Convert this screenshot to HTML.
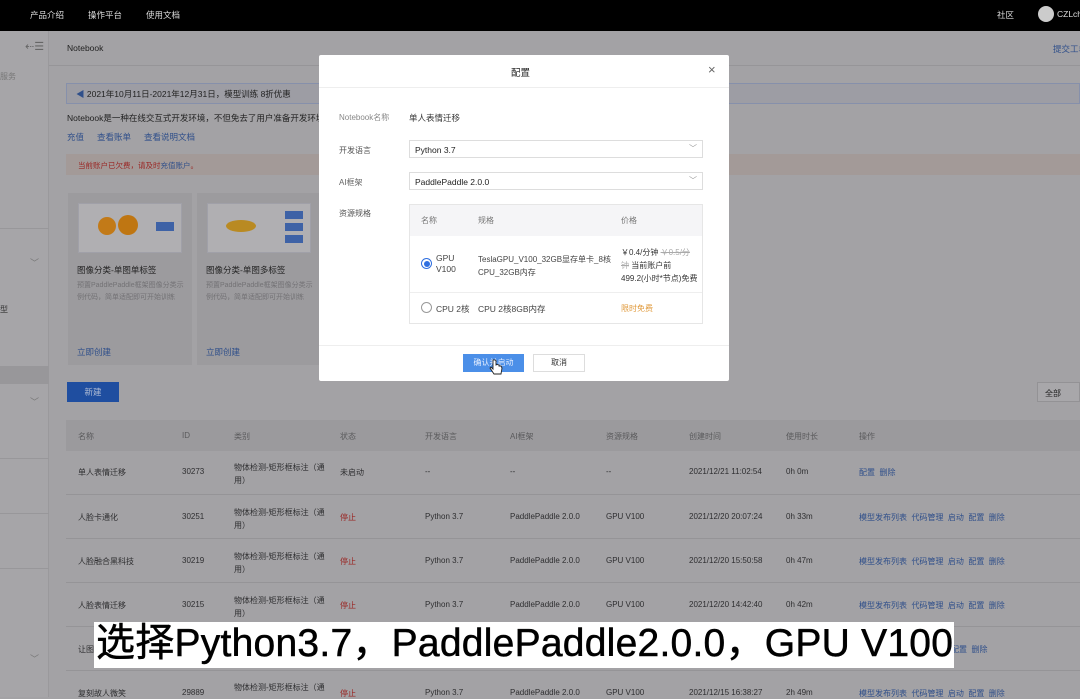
<!DOCTYPE html>
<html style="background:#a3a2a5"><head><meta charset="utf-8"><style>
*{margin:0;padding:0;box-sizing:border-box}
html,body{background:#a3a2a5}
body{width:1080px;height:697px;overflow:hidden;font-family:"Liberation Sans","Noto Sans CJK SC",sans-serif;font-size:8px;color:#2e2e30;position:relative}
.a{position:absolute;white-space:nowrap}
.blue{color:#2f4f8a}
.red{color:#9a2624}
.gr{color:#5a5a5c}
</style></head><body>
<div class="a" style="left:0;top:0;width:1080px;height:697px;background:#a3a2a5"></div>
<div class="a" style="left:0;top:0;width:1080px;height:31px;background:#000"></div>
<div class="a" style="left:30px;top:9px;color:#ddd;font-size:8.5px">产品介绍</div>
<div class="a" style="left:88px;top:9px;color:#ddd;font-size:8.5px">操作平台</div>
<div class="a" style="left:146px;top:9px;color:#ddd;font-size:8.5px">使用文档</div>
<div class="a" style="left:997px;top:9px;color:#ddd;font-size:8.5px">社区</div>
<div class="a" style="left:1038px;top:6px;width:16px;height:16px;border-radius:50%;background:#ccc"></div>
<div class="a" style="left:1057px;top:9px;color:#ddd;font-size:8.5px">CZLch</div>
<div class="a" style="left:0;top:31px;width:49px;height:666px;background:#a6a5a8;border-right:1px solid #9a999c"></div>
<div class="a" style="left:25px;top:40px;color:#666;font-size:11px">⇠☰</div>
<div class="a" style="left:0;top:71px;color:#777;font-size:8px">服务</div>
<div class="a" style="left:0;top:228px;width:49px;height:1px;background:#98979a"></div>
<div class="a" style="left:30px;top:256px;color:#777;font-size:9px">﹀</div>
<div class="a" style="left:0;top:304px;color:#333;font-size:8px">型</div>
<div class="a" style="left:0;top:366px;width:49px;height:18px;background:#98979a"></div>
<div class="a" style="left:30px;top:395px;color:#777;font-size:9px">﹀</div>
<div class="a" style="left:0;top:458px;width:49px;height:1px;background:#98979a"></div>
<div class="a" style="left:0;top:513px;width:49px;height:1px;background:#98979a"></div>
<div class="a" style="left:0;top:568px;width:49px;height:1px;background:#98979a"></div>
<div class="a" style="left:30px;top:652px;color:#777;font-size:9px">﹀</div>
<div class="a" style="left:67px;top:43px;font-size:8.5px;color:#222">Notebook</div>
<div class="a" style="left:1053px;top:43px;font-size:8.5px"><span class="blue">提交工单</span></div>
<div class="a" style="left:49px;top:65px;width:1031px;height:1px;background:#969598"></div>
<div class="a" style="left:66px;top:83px;width:1014px;height:21px;border:1px solid #8690ab;background:#9d9da4"></div>
<div class="a" style="left:76px;top:88px;font-size:8.5px;color:#222"><span class="blue">◀︎</span> 2021年10月11日-2021年12月31日，模型训练 8折优惠</div>
<div class="a" style="left:67px;top:112px;font-size:8.5px;color:#222">Notebook是一种在线交互式开发环境，不但免去了用户准备开发环境的</div>
<div class="a" style="left:67px;top:131px;font-size:8.5px"><span class="blue">充值</span><span class="blue" style="margin-left:13px">查看账单</span><span class="blue" style="margin-left:13px">查看说明文档</span></div>
<div class="a" style="left:66px;top:154px;width:1014px;height:21px;background:#a39a98"></div>
<div class="a red" style="left:78px;top:160px;font-size:7.5px">当前账户已欠费，请及时<span class="blue">充值账户</span>。</div>
<div class="a" style="left:68px;top:193px;width:124px;height:172px;background:#9c9b9e"></div>
<div class="a" style="left:197px;top:193px;width:124px;height:172px;background:#9c9b9e"></div>
<div class="a" style="left:78px;top:203px;width:104px;height:50px;background:#b0afb2;border:1px solid #a0a0a8"></div>
<div class="a" style="left:98px;top:217px;width:18px;height:18px;border-radius:50%;background:#c27a18"></div>
<div class="a" style="left:118px;top:215px;width:20px;height:20px;border-radius:50%;background:#bf7612"></div>
<div class="a" style="left:156px;top:222px;width:18px;height:9px;background:#3e62a6"></div>
<div class="a" style="left:207px;top:203px;width:104px;height:50px;background:#b0afb2;border:1px solid #a0a0a8"></div>
<div class="a" style="left:226px;top:220px;width:30px;height:12px;border-radius:50%;background:#b98a22"></div>
<div class="a" style="left:285px;top:211px;width:18px;height:8px;background:#3e62a6"></div>
<div class="a" style="left:285px;top:223px;width:18px;height:8px;background:#3e62a6"></div>
<div class="a" style="left:285px;top:235px;width:18px;height:8px;background:#3e62a6"></div>
<div class="a" style="left:77px;top:264px;font-size:8.5px;color:#222">图像分类-单图单标签</div>
<div class="a" style="left:206px;top:264px;font-size:8.5px;color:#222">图像分类-单图多标签</div>
<div class="a" style="left:77px;top:280px;font-size:7px;line-height:12px;color:#737275">预置PaddlePaddle框架图像分类示<br>例代码，简单适配即可开始训练</div>
<div class="a" style="left:206px;top:280px;font-size:7px;line-height:12px;color:#737275">预置PaddlePaddle框架图像分类示<br>例代码，简单适配即可开始训练</div>
<div class="a blue" style="left:77px;top:346px;font-size:8.5px">立即创建</div>
<div class="a blue" style="left:206px;top:346px;font-size:8.5px">立即创建</div>
<div class="a" style="left:67px;top:382px;width:52px;height:20px;background:#1f4ea0;color:#b0bcd4;font-size:8.5px;text-align:center;line-height:20px">新建</div>
<div class="a" style="left:1037px;top:382px;width:43px;height:20px;border:1px solid #939295;background:#a8a7aa;font-size:8px;padding:5px 7px;color:#222">全部</div>
<div class="a" style="left:66px;top:420px;width:1014px;height:31px;background:#9b9a9d"></div>
<div class="a gr" style="left:0;top:431px;width:1080px;height:10px;font-size:8px">
<span class="a" style="left:78px">名称</span><span class="a" style="left:182px">ID</span><span class="a" style="left:234px">类别</span><span class="a" style="left:340px">状态</span><span class="a" style="left:425px">开发语言</span><span class="a" style="left:510px">AI框架</span><span class="a" style="left:606px">资源规格</span><span class="a" style="left:689px">创建时间</span><span class="a" style="left:786px">使用时长</span><span class="a" style="left:859px">操作</span></div>
<div class="a" style="left:66px;top:494px;width:1014px;height:1px;background:#959497"></div>
<div class="a" style="left:66px;top:538px;width:1014px;height:1px;background:#959497"></div>
<div class="a" style="left:66px;top:582px;width:1014px;height:1px;background:#959497"></div>
<div class="a" style="left:66px;top:626px;width:1014px;height:1px;background:#959497"></div>
<div class="a" style="left:66px;top:670px;width:1014px;height:1px;background:#959497"></div>
<div class="a" style="left:0;top:467px;width:1080px;font-size:8px">
<span class="a" style="left:78px">单人表情迁移</span><span class="a" style="left:182px">30273</span><span class="a" style="left:234px;top:-6px;line-height:13px">物体检测-矩形框标注（通<br>用）</span><span class="a" style="left:340px">未启动</span><span class="a" style="left:425px">--</span><span class="a" style="left:510px">--</span><span class="a" style="left:606px">--</span><span class="a" style="left:689px">2021/12/21 11:02:54</span><span class="a" style="left:786px">0h 0m</span><span class="a blue" style="left:859px">配置&nbsp;&nbsp;删除</span></div>
<div class="a" style="left:0;top:512px;width:1080px;font-size:8px">
<span class="a" style="left:78px">人脸卡通化</span><span class="a" style="left:182px">30251</span><span class="a" style="left:234px;top:-6px;line-height:13px">物体检测-矩形框标注（通<br>用）</span><span class="a red" style="left:340px">停止</span><span class="a" style="left:425px">Python 3.7</span><span class="a" style="left:510px">PaddlePaddle 2.0.0</span><span class="a" style="left:606px">GPU V100</span><span class="a" style="left:689px">2021/12/20 20:07:24</span><span class="a" style="left:786px">0h 33m</span><span class="a blue" style="left:859px">模型发布列表&nbsp;&nbsp;代码管理&nbsp;&nbsp;启动&nbsp;&nbsp;配置&nbsp;&nbsp;删除</span></div>
<div class="a" style="left:0;top:556px;width:1080px;font-size:8px">
<span class="a" style="left:78px">人脸融合黑科技</span><span class="a" style="left:182px">30219</span><span class="a" style="left:234px;top:-6px;line-height:13px">物体检测-矩形框标注（通<br>用）</span><span class="a red" style="left:340px">停止</span><span class="a" style="left:425px">Python 3.7</span><span class="a" style="left:510px">PaddlePaddle 2.0.0</span><span class="a" style="left:606px">GPU V100</span><span class="a" style="left:689px">2021/12/20 15:50:58</span><span class="a" style="left:786px">0h 47m</span><span class="a blue" style="left:859px">模型发布列表&nbsp;&nbsp;代码管理&nbsp;&nbsp;启动&nbsp;&nbsp;配置&nbsp;&nbsp;删除</span></div>
<div class="a" style="left:0;top:600px;width:1080px;font-size:8px">
<span class="a" style="left:78px">人脸表情迁移</span><span class="a" style="left:182px">30215</span><span class="a" style="left:234px;top:-6px;line-height:13px">物体检测-矩形框标注（通<br>用）</span><span class="a red" style="left:340px">停止</span><span class="a" style="left:425px">Python 3.7</span><span class="a" style="left:510px">PaddlePaddle 2.0.0</span><span class="a" style="left:606px">GPU V100</span><span class="a" style="left:689px">2021/12/20 14:42:40</span><span class="a" style="left:786px">0h 42m</span><span class="a blue" style="left:859px">模型发布列表&nbsp;&nbsp;代码管理&nbsp;&nbsp;启动&nbsp;&nbsp;配置&nbsp;&nbsp;删除</span></div>
<div class="a" style="left:0;top:644px;width:1080px;font-size:8px">
<span class="a" style="left:78px">让图</span><span class="a blue" style="left:951px">配置&nbsp;&nbsp;删除</span></div>
<div class="a" style="left:0;top:688px;width:1080px;font-size:8px">
<span class="a" style="left:78px">复刻故人微笑</span><span class="a" style="left:182px">29889</span><span class="a" style="left:234px;top:-6px">物体检测-矩形框标注（通</span><span class="a red" style="left:340px">停止</span><span class="a" style="left:425px">Python 3.7</span><span class="a" style="left:510px">PaddlePaddle 2.0.0</span><span class="a" style="left:606px">GPU V100</span><span class="a" style="left:689px">2021/12/15 16:38:27</span><span class="a" style="left:786px">2h 49m</span><span class="a blue" style="left:859px">模型发布列表&nbsp;&nbsp;代码管理&nbsp;&nbsp;启动&nbsp;&nbsp;配置&nbsp;&nbsp;删除</span></div>
<div class="a" style="left:94px;top:622px;width:860px;height:46px;background:#fff"></div>
<div class="a" style="left:96px;top:620px;font-size:39px;line-height:48px;color:#000;-webkit-text-stroke:0.5px #000;letter-spacing:0.25px">选择Python3.7，PaddlePaddle2.0.0，GPU V100</div>
<div class="a" style="left:319px;top:55px;width:410px;height:326px;background:#fff;border-radius:2px"></div>
<div class="a" style="left:319px;top:87px;width:410px;height:1px;background:#eee"></div>
<div class="a" style="left:511px;top:65px;font-size:9.5px;color:#222">配置</div>
<div class="a" style="left:708px;top:62px;font-size:13px;color:#666">×</div>
<div class="a" style="left:339px;top:112px;font-size:8px;color:#888">Notebook名称</div>
<div class="a" style="left:409px;top:112px;font-size:8.5px;color:#333">单人表情迁移</div>
<div class="a" style="left:339px;top:145px;font-size:8px;color:#555">开发语言</div>
<div class="a" style="left:409px;top:140px;width:294px;height:18px;border:1px solid #ddd"></div>
<div class="a" style="left:415px;top:145px;font-size:8.5px;color:#222">Python 3.7</div>
<div class="a" style="left:689px;top:143px;font-size:8px;color:#999">﹀</div>
<div class="a" style="left:339px;top:177px;font-size:8px;color:#666">AI框架</div>
<div class="a" style="left:409px;top:172px;width:294px;height:18px;border:1px solid #ddd"></div>
<div class="a" style="left:415px;top:177px;font-size:8.5px;color:#222">PaddlePaddle 2.0.0</div>
<div class="a" style="left:689px;top:175px;font-size:8px;color:#999">﹀</div>
<div class="a" style="left:339px;top:208px;font-size:8px;color:#555">资源规格</div>
<div class="a" style="left:409px;top:204px;width:294px;height:120px;border:1px solid #e6e6e6"></div>
<div class="a" style="left:410px;top:205px;width:292px;height:31px;background:#f5f5f7"></div>
<div class="a" style="left:421px;top:215px;font-size:8px;color:#777">名称</div>
<div class="a" style="left:478px;top:215px;font-size:8px;color:#777">规格</div>
<div class="a" style="left:621px;top:215px;font-size:8px;color:#777">价格</div>
<div class="a" style="left:421px;top:258px;width:11px;height:11px;border-radius:50%;border:1px solid #2f6fe0;background:#fff"></div>
<div class="a" style="left:423.5px;top:260.5px;width:6px;height:6px;border-radius:50%;background:#2f6fe0"></div>
<div class="a" style="left:436px;top:253px;font-size:8.5px;line-height:11px;color:#444">GPU<br>V100</div>
<div class="a" style="left:478px;top:253px;font-size:8px;line-height:13px;color:#444">TeslaGPU_V100_32GB显存单卡_8核<br>CPU_32GB内存</div>
<div class="a" style="left:621px;top:246px;font-size:8px;line-height:13px;color:#333">￥0.4/分钟 <s style="color:#aaa">￥0.5/分</s><br><s style="color:#aaa">钟</s> 当前账户前<br>499.2(小时*节点)免费</div>
<div class="a" style="left:410px;top:292px;width:292px;height:1px;background:#eee"></div>
<div class="a" style="left:421px;top:302px;width:11px;height:11px;border-radius:50%;border:1px solid #999;background:#fff"></div>
<div class="a" style="left:436px;top:303px;font-size:8.5px;color:#444">CPU 2核</div>
<div class="a" style="left:478px;top:303px;font-size:8.5px;color:#444">CPU 2核8GB内存</div>
<div class="a" style="left:621px;top:303px;font-size:8px;color:#e09a3c">限时免费</div>
<div class="a" style="left:319px;top:345px;width:410px;height:1px;background:#eee"></div>
<div class="a" style="left:463px;top:354px;width:61px;height:18px;background:#4b8fe8;color:#e6efff;font-size:8px;text-align:center;line-height:18px">确认并启动</div>
<div class="a" style="left:533px;top:354px;width:52px;height:18px;border:1px solid #ddd;background:#fff;color:#333;font-size:8px;text-align:center;line-height:16px">取消</div>
<svg class="a" style="left:489px;top:359px" width="14" height="16" viewBox="0 0 14 16"><path d="M4 1v9l-2-2-1 1 4 6h7l1-6-1-2-2 0V6L8 5.5 7 6V1.5L5.5 0.8Z" fill="#fff" stroke="#222" stroke-width="0.9"/></svg>
</body></html>
